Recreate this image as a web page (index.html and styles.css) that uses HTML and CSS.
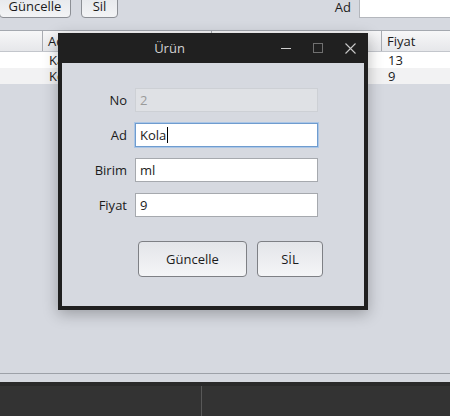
FILE: index.html
```html
<!DOCTYPE html>
<html>
<head>
<meta charset="utf-8">
<link rel="stylesheet" href="styles.css">
</head>
<body>
<div class="app">
  <div class="toolbar">
    <button class="tbtn guncelle">Güncelle</button>
    <button class="tbtn sil">Sil</button>
    <span class="search-label">Ad</span>
    <div class="search-field"></div>
  </div>
  <div class="table">
    <div class="thead">
      <div class="th c1"></div>
      <div class="th c2">Ad</div>
      <div class="th c3">Birim</div>
      <div class="th c4">Fiyat</div>
    </div>
    <div class="row">
      <div class="td c1"></div>
      <div class="td c2">Kalem</div>
      <div class="td c3">adet</div>
      <div class="td c4">13</div>
    </div>
    <div class="row alt">
      <div class="td c1"></div>
      <div class="td c2">Kola</div>
      <div class="td c3">ml</div>
      <div class="td c4">9</div>
    </div>
  </div>
  <div class="fill"></div>
  <div class="divider"></div>
  <div class="statusbar">
    <div class="seg seg1"></div>
    <div class="seg seg2"></div>
  </div>
</div>

<div class="dialog">
  <div class="titlebar">
    <div class="title">Ürün</div>
    <div class="controls">
      <span class="ctl-min"></span>
      <span class="ctl-max"></span>
      <svg class="ctl-close" width="11" height="11" viewBox="0 0 11 11"><path d="M0.5 0.5 L10.5 10.5 M10.5 0.5 L0.5 10.5" stroke="#c9c9c9" stroke-width="1.1" fill="none"/></svg>
    </div>
  </div>
  <div class="dlg-body">
    <div class="form">
      <label class="lbl">No</label>
      <div class="field disabled">2</div>
      <label class="lbl">Ad</label>
      <div class="field focus">Kola<span class="caret"></span></div>
      <label class="lbl">Birim</label>
      <div class="field">ml</div>
      <label class="lbl">Fiyat</label>
      <div class="field">9</div>
    </div>
    <div class="actions">
      <button class="dbtn wide">Güncelle</button>
      <button class="dbtn narrow">SİL</button>
    </div>
  </div>
</div>
</body>
</html>
```

FILE: styles.css
```css
html, body {
  margin: 0;
  padding: 0;
}
body {
  width: 450px;
  height: 416px;
  overflow: hidden;
  position: relative;
  background: #d6d9e0;
  font-family: "Open Sans", "Noto Sans", sans-serif;
  font-size: 13px;
  color: #1b1b1b;
}
.app {
  display: flex;
  flex-direction: column;
  height: 416px;
}
.toolbar {
  height: 30px;
  display: flex;
  align-items: flex-start;
  flex: none;
}
.tbtn {
  margin-top: -7px;
  height: 25px;
  box-sizing: border-box;
  border: 1px solid #8c8f95;
  border-radius: 4px;
  background: linear-gradient(#e4e6ea, #f3f4f6);
  font-family: "Open Sans", "Noto Sans", sans-serif;
  font-size: 13px;
  color: #1b1b1b;
  padding: 0;
}
.guncelle {
  width: 72px;
  margin-left: -1px;
}
.sil {
  width: 37px;
  margin-left: 10px;
}
.search-label {
  margin-left: auto;
  line-height: 14px;
  margin-top: 0;
}
.search-field {
  width: 92px;
  height: 18px;
  box-sizing: border-box;
  margin-left: 8px;
  margin-right: -1px;
  background: #fff;
  border: 1px solid #b4b7bd;
  border-top: none;
}
.table {
  flex: none;
}
.thead {
  display: flex;
  height: 22px;
  box-sizing: border-box;
  border-top: 1px solid #a4a8af;
  border-bottom: 1px solid #c3c6cc;
  background: linear-gradient(#f7f7f8, #e6e7ea);
}
.th {
  box-sizing: border-box;
  border-right: 1px solid #a9acb2;
  padding-left: 5px;
  line-height: 20px;
}
.c1 { width: 43px; flex: none; }
.c2 { width: 169px; flex: none; }
.c3 { width: 170px; flex: none; }
.c4 { flex: 1; border-right: none; }
.row {
  display: flex;
  height: 16px;
  line-height: 16px;
  background: #ffffff;
}
.row.alt {
  background: #f2f2f3;
}
.td {
  box-sizing: border-box;
  padding-left: 6px;
  white-space: nowrap;
  overflow: hidden;
}
.fill {
  flex: 1;
}
.divider {
  height: 1px;
  background: #9da1a8;
  flex: none;
  margin-bottom: 8px;
}
.statusbar {
  height: 34px;
  flex: none;
  box-sizing: border-box;
  border-top: 4px solid #2a2a2a;
  background: #333333;
  display: flex;
}
.seg1 {
  width: 201px;
  border-right: 1px solid #585858;
}
.seg2 {
  flex: 1;
}

/* dialog */
.dialog {
  position: absolute;
  left: 58px;
  top: 33px;
  width: 310px;
  box-sizing: border-box;
  padding: 0 4px 4px;
  background: #202020;
  box-shadow: 0 4px 14px rgba(0, 0, 0, 0.28);
}
.titlebar {
  height: 30px;
  display: flex;
  align-items: center;
}
.title {
  flex: 1;
  text-align: center;
  color: #d2d2d2;
  padding-right: 4px;
}
.controls {
  display: flex;
  align-items: center;
  gap: 22px;
  padding-right: 8px;
  height: 30px;
}
.ctl-min {
  width: 10px;
  height: 1px;
  background: #cfcfcf;
}
.ctl-max {
  width: 10px;
  height: 10px;
  box-sizing: border-box;
  border: 1px solid #707070;
}
.ctl-close {
  display: block;
}
.dlg-body {
  background: #d6d9e0;
  height: 243px;
  box-sizing: border-box;
  padding-top: 25px;
}
.form {
  display: grid;
  grid-template-columns: 65px 183px;
  column-gap: 8px;
  row-gap: 11px;
  grid-auto-rows: 24px;
  align-items: center;
}
.lbl {
  text-align: right;
}
.field {
  height: 24px;
  box-sizing: border-box;
  border: 1px solid #a6a9ae;
  background: #ffffff;
  padding-left: 4px;
  display: flex;
  align-items: center;
  color: #1b1b1b;
}
.field.disabled {
  background: #dfe1e5;
  border-color: #cdd0d5;
  color: #9a9a9a;
}
.field.focus {
  border-color: #6f9ccf;
  box-shadow: 0 0 0 1px #abc6e6;
}
.caret {
  display: inline-block;
  width: 1px;
  height: 16px;
  background: #000;
  margin-left: 1px;
}
.actions {
  display: flex;
  gap: 10px;
  padding-left: 76px;
  margin-top: 24px;
}
.dbtn {
  height: 36px;
  box-sizing: border-box;
  border: 1px solid #7e8085;
  border-radius: 4px;
  background: linear-gradient(#e3e5e9, #f4f5f7);
  font-family: "Open Sans", "Noto Sans", sans-serif;
  font-size: 13px;
  color: #1b1b1b;
  padding: 0;
}
.wide { width: 109px; }
.narrow { width: 66px; }
```
